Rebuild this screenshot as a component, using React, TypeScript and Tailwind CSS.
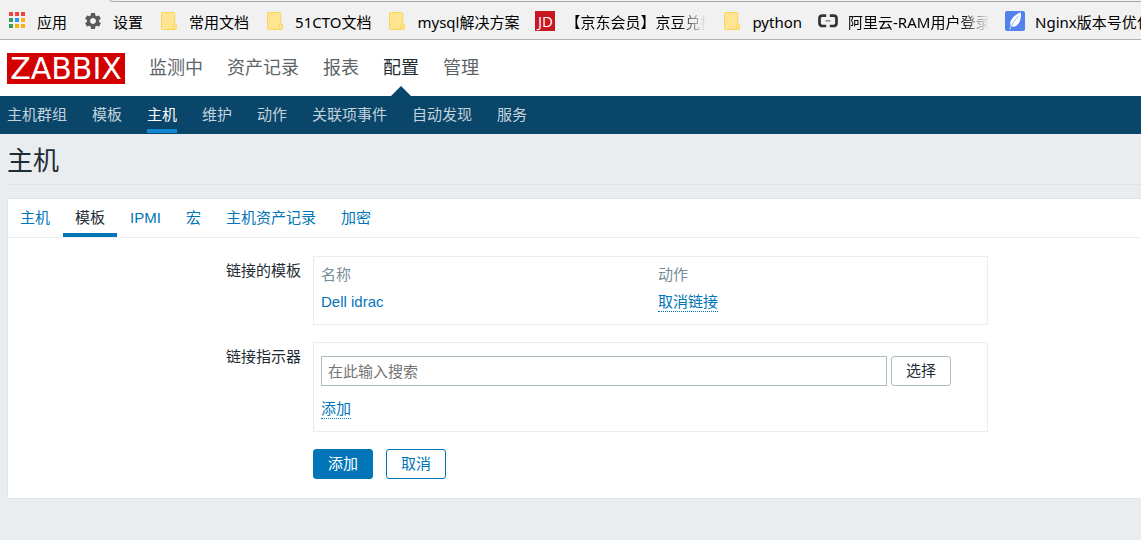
import type { ReactNode } from "react";
import { MdSettings } from "react-icons/md";
import clsx from "clsx";

interface IBookmark {
  title: string;
  icon: ReactNode;
  clipped?: boolean;
}

function AppsIcon() {
  const colors = [
    "#f4433c", "#f4433c", "#f4433c",
    "#34a05f", "#3492f0", "#fcb10a",
    "#34a05f", "#fcb10a", "#fcb10a",
  ];

  return (
    <svg width="20" height="20" viewBox="0 0 20 20" aria-hidden="true">
      {colors.map((color, i) => (
        <rect
          key={i}
          x={2 + (i % 3) * 6}
          y={1 + Math.floor(i / 3) * 6}
          width="4"
          height="4"
          fill={color}
        />
      ))}
    </svg>
  );
}

function FolderIcon() {
  return (
    <svg width="20" height="20" viewBox="0 0 20 20" aria-hidden="true">
      <path
        d="M3.5 1.500h11.200q1 0 1 1v9.800q1.800.6 1.800 2.700v1.400q0 2.100-2 2.100H3.500q-1 0-1-1v-15q0-1 1-1z"
        fill="#ffe591"
        stroke="#fbd656"
        strokeWidth="1"
      />
      <path
        d="M14.200 18.300v-3.600q0-2 1.500-2 1.800.4 1.800 2.400v1.200q0 2-3.300 2z"
        fill="#ffe591"
        stroke="#fbd656"
        strokeWidth="1"
      />
    </svg>
  );
}

function JdIcon() {
  return (
    <span
      aria-hidden="true"
      className="flex h-5 w-5 items-center justify-center bg-[#c91623] font-['Open_Sans',sans-serif] text-[15px] leading-5 font-medium text-white"
    >
      JD
    </span>
  );
}

function AliyunIcon() {
  return (
    <svg width="20" height="20" viewBox="0 0 20 20" aria-hidden="true">
      <path
        d="M8.200 4.600H4.700Q1.500 4.600 1.500 7.400v4.800q0 2.800 3.200 2.800h3.500M11.800 4.600h3.500q3.200 0 3.200 2.800v4.800q0 2.800-3.200 2.800h-3.500"
        fill="none"
        stroke="#333"
        strokeWidth="2.700"
      />
      <path d="M7.500 9.800h5" stroke="#8a8a8a" strokeWidth="1.500" />
    </svg>
  );
}

function FeatherIcon() {
  return (
    <svg width="20" height="20" viewBox="0 0 20 20" aria-hidden="true">
      <rect width="20" height="20" rx="2" fill="#5083ec" />
      <path
        d="M15.700 1.200q.8 4.800-.8 9-1.500 3.800-5 5.200-2 .7-3.400.2l-1.300 3-.9-.3 1.500-3.500Q4.200 11.500 6.800 8q3.200-4.500 8.900-6.800z"
        fill="#fff"
      />
      <path d="M5.200 17.500Q8 10.500 13.500 4.800" fill="none" stroke="#5083ec" strokeWidth=".6" />
    </svg>
  );
}

const bookmarks: IBookmark[] = [
  { title: "应用", icon: <AppsIcon /> },
  { title: "设置", icon: <MdSettings size={20} color="#5a5a5a" /> },
  { title: "常用文档", icon: <FolderIcon /> },
  { title: "51CTO文档", icon: <FolderIcon /> },
  { title: "mysql解决方案", icon: <FolderIcon /> },
  { title: "【京东会员】京豆兑换", icon: <JdIcon />, clipped: true },
  { title: "python", icon: <FolderIcon /> },
  { title: "阿里云-RAM用户登录", icon: <AliyunIcon />, clipped: true },
  { title: "Nginx版本号优化", icon: <FeatherIcon /> },
];

const mainMenu = ["监测中", "资产记录", "报表", "配置", "管理"];
const subMenu = ["主机群组", "模板", "主机", "维护", "动作", "关联项事件", "自动发现", "服务"];
const tabs = ["主机", "模板", "IPMI", "宏", "主机资产记录", "加密"];

const dottedLink =
  "cursor-pointer border-b border-dotted border-[#0275b8] leading-[18px] text-[#0275b8]";
const buttonClass =
  "h-[30px] w-[60px] shrink-0 cursor-pointer rounded-[3px] border text-[15px]";

function BookmarksBar() {
  return (
    <div className="relative h-10 overflow-hidden border-b border-[#b0b2b1] bg-[#f1f1f1] pt-[11px] pl-[7px]">
      {/* lower edge of the address bar */}
      <div className="absolute -top-2 right-0 left-[109px] h-[10px] rounded-bl-sm border-b border-l border-[#a9a9a9] bg-[#f1f1f1]" />
      <div className="flex gap-4 font-['Noto_Sans','Noto_Sans_CJK_SC',sans-serif] text-[15px] leading-[22px] text-black">
        {bookmarks.map(({ title, icon, clipped }) => (
          <a key={title} href="#" className="flex shrink-0 gap-[10px]">
            <span className="h-5 w-5 shrink-0">{icon}</span>
            <span
              className={clsx(
                "whitespace-nowrap",
                clipped &&
                  "w-[141px] overflow-hidden mask-r-from-80% mask-r-to-100%",
              )}
            >
              {title}
            </span>
          </a>
        ))}
      </div>
    </div>
  );
}

function Header() {
  return (
    <header>
      <div className="flex h-14 items-center bg-white pl-[7px]">
        <a
          href="#"
          className="flex h-[31px] w-[118px] items-center justify-center bg-[#d40000] font-['DejaVu_Sans',sans-serif] text-[30px] leading-[31px] text-white"
        >
          ZABBIX
        </a>
        <nav className="ml-6 flex h-full gap-6 text-lg leading-[56px]">
          {mainMenu.map((item) => (
            <a
              key={item}
              href="#"
              className={clsx(
                "relative",
                item === "配置" ? "text-[#1f2c33]" : "text-[#5d6468]",
              )}
            >
              {item}
              {item === "配置" && (
                <svg
                  width="20"
                  height="10"
                  viewBox="0 0 20 10"
                  className="absolute bottom-0 left-2"
                  aria-hidden="true"
                >
                  <path d="M10 0l10 10H0z" fill="#0a466a" />
                </svg>
              )}
            </a>
          ))}
        </nav>
      </div>
      <nav className="flex h-[38px] gap-[25px] bg-[#0a466a] pb-px pl-[7px]">
        {subMenu.map((item) => (
          <a
            key={item}
            href="#"
            className={clsx(
              "border-b-4 leading-[38px]",
              item === "主机"
                ? "border-[#1285d0] text-white"
                : "border-transparent text-[#c3d3dd]",
            )}
          >
            {item}
          </a>
        ))}
      </nav>
    </header>
  );
}

function TemplateForm() {
  return (
    <form
      className="grid grid-cols-[293px_minmax(0,675px)] gap-x-3 gap-y-[17px] pt-[18px] pb-[19px]"
      onSubmit={(e) => e.preventDefault()}
    >
      <span id="linked" className="pt-1 text-right leading-[22px]">
        链接的模板
      </span>
      <div className="border border-[#ebeef0] px-[7px] pt-[5px] pb-2">
        <table aria-labelledby="linked" className="w-full table-fixed text-left">
          <thead>
            <tr className="h-[27px] text-[#768d99]">
              <th className="w-[337px] font-normal">名称</th>
              <th className="font-normal">动作</th>
            </tr>
          </thead>
          <tbody>
            <tr className="h-[27px]">
              <td>
                <a href="#" className="text-[#0275b8]">
                  Dell idrac
                </a>
              </td>
              <td>
                <button type="button" className={dottedLink}>
                  取消链接
                </button>
              </td>
            </tr>
          </tbody>
        </table>
      </div>

      <label htmlFor="indicator" className="pt-1 text-right leading-[22px]">
        链接指示器
      </label>
      <div className="border border-[#ebeef0] px-[7px] pt-[13px] pb-3">
        <div className="flex gap-1">
          <input
            id="indicator"
            type="text"
            placeholder="在此输入搜索"
            className="h-[30px] w-[566px] min-w-0 border border-[#acbbc2] px-[6px] placeholder:text-[#757575] focus:outline-none"
          />
          <button
            type="button"
            className={clsx(buttonClass, "border-[#acbbc2] text-[#1f2c33]")}
          >
            选择
          </button>
        </div>
        <button type="button" className={clsx(dottedLink, "mt-[14px] block")}>
          添加
        </button>
      </div>

      <div className="col-start-2 flex gap-[13px]">
        <button
          type="submit"
          className={clsx(buttonClass, "border-[#0275b8] bg-[#0275b8] text-white")}
        >
          添加
        </button>
        <button
          type="button"
          className={clsx(buttonClass, "border-[#0275b8] text-[#0275b8]")}
        >
          取消
        </button>
      </div>
    </form>
  );
}

function App() {
  return (
    <div className="min-h-screen bg-[#e9edf0] font-['Liberation_Sans','Noto_Sans_CJK_SC',sans-serif] text-[15px] text-[#1f2c33]">
      <BookmarksBar />
      <Header />
      <main className="pl-[7px]">
        <h1 className="h-[51px] border-b border-[#dfe4e7] text-[26px] leading-[54px]">
          主机
        </h1>
        <section className="mt-[13px] border-y border-l border-[#dfe4e7] bg-white">
          <nav className="flex h-[39px] gap-px border-b border-[#ebeef0]">
            {tabs.map((tab) => (
              <a
                key={tab}
                href="#"
                className={clsx(
                  "border-b-4 px-3 leading-[38px]",
                  tab === "模板"
                    ? "border-[#0275b8] text-[#1f2c33]"
                    : "border-transparent text-[#0275b8]",
                )}
              >
                {tab}
              </a>
            ))}
          </nav>
          <TemplateForm />
        </section>
      </main>
    </div>
  );
}

export default App;
